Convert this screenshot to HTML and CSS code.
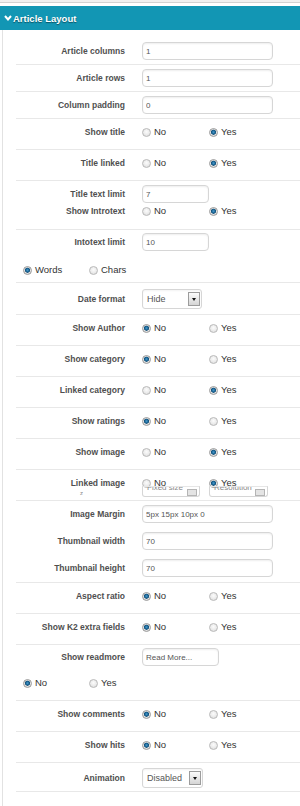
FILE: index.html
```html
<!DOCTYPE html>
<html lang="en">
<head>
  <meta charset="UTF-8" />
  <title>Article Layout</title>
  <link rel="stylesheet" href="styles.css">
</head>
<body>
  <div class="topbar"></div>

  <!-- Article layout panel -->
  <div class="hdr">
    <svg class="chev" width="8" height="6" viewBox="0 0 8 6"><polyline points="1,1 4,4.5 7,1" fill="none" stroke="#fff" stroke-width="2"/></svg>
    Article Layout
  </div>

  <div class="panel">
    <div class="row">
      <div class="line l-inp"><label class="lbl">Article columns</label><input class="inp" type="text" value="1"></div>
    </div>
    <div class="row">
      <div class="line l-inp"><label class="lbl">Article rows</label><input class="inp" type="text" value="1"></div>
    </div>
    <div class="row">
      <div class="line l-inp"><label class="lbl">Column padding</label><input class="inp" type="text" value="0"></div>
    </div>
    <div class="row">
      <div class="line l-rad"><label class="lbl">Show title</label>
        <span class="opt"><span class="radio"></span>No</span><span class="opt"><span class="radio on"></span>Yes</span></div>
    </div>
    <div class="row">
      <div class="line l-rad"><label class="lbl">Title linked</label>
        <span class="opt"><span class="radio"></span>No</span><span class="opt"><span class="radio on"></span>Yes</span></div>
    </div>
    <div class="row">
      <div class="line l-sub"><label class="lbl">Title text limit</label><input class="inp short" type="text" value="7"></div>
      <div class="line l-after"><label class="lbl">Show Introtext</label>
        <span class="opt"><span class="radio"></span>No</span><span class="opt"><span class="radio on"></span>Yes</span></div>
    </div>
    <div class="row">
      <div class="line l-sub2"><label class="lbl">Intotext limit</label><input class="inp short" type="text" value="10"></div>
      <div class="line l-free"><span class="opt"><span class="radio on"></span>Words</span><span class="opt"><span class="radio"></span>Chars</span></div>
    </div>
    <div class="row">
      <div class="line l-sel"><label class="lbl">Date format</label>
        <div class="sel"><span>Hide</span><span class="arrow"></span></div></div>
    </div>
    <div class="row">
      <div class="line l-rad"><label class="lbl">Show Author</label>
        <span class="opt"><span class="radio on"></span>No</span><span class="opt"><span class="radio"></span>Yes</span></div>
    </div>
    <div class="row">
      <div class="line l-rad"><label class="lbl">Show category</label>
        <span class="opt"><span class="radio on"></span>No</span><span class="opt"><span class="radio"></span>Yes</span></div>
    </div>
    <div class="row">
      <div class="line l-rad"><label class="lbl">Linked category</label>
        <span class="opt"><span class="radio"></span>No</span><span class="opt"><span class="radio on"></span>Yes</span></div>
    </div>
    <div class="row">
      <div class="line l-rad"><label class="lbl">Show ratings</label>
        <span class="opt"><span class="radio on"></span>No</span><span class="opt"><span class="radio"></span>Yes</span></div>
    </div>
    <div class="row">
      <div class="line l-rad"><label class="lbl">Show image</label>
        <span class="opt"><span class="radio"></span>No</span><span class="opt"><span class="radio on"></span>Yes</span></div>
    </div>
    <div class="row">
      <div class="line l-over">
        <div class="lbl lbl-stack"><span>Linked image</span><span class="stray">z</span></div>
        <div class="ctl-stack">
          <div class="opts"><span class="opt"><span class="radio"></span>No</span><span class="opt"><span class="radio on"></span>Yes</span></div>
          <div class="minis">
            <div class="mini w1"><span>Fixed size</span><i></i></div>
            <div class="mini w2"><span>Resolution</span><i></i></div>
          </div>
        </div>
      </div>
    </div>
    <div class="row">
      <div class="line l-grp"><label class="lbl">Image Margin</label><input class="inp" type="text" value="5px 15px 10px 0"></div>
      <div class="line l-grp"><label class="lbl">Thumbnail width</label><input class="inp" type="text" value="70"></div>
      <div class="line l-grp"><label class="lbl">Thumbnail height</label><input class="inp" type="text" value="70"></div>
    </div>
    <div class="row">
      <div class="line l-rad"><label class="lbl">Aspect ratio</label>
        <span class="opt"><span class="radio on"></span>No</span><span class="opt"><span class="radio"></span>Yes</span></div>
    </div>
    <div class="row">
      <div class="line l-rad"><label class="lbl">Show K2 extra fields</label>
        <span class="opt"><span class="radio on"></span>No</span><span class="opt"><span class="radio"></span>Yes</span></div>
    </div>
    <div class="row">
      <div class="line l-sub2"><label class="lbl">Show readmore</label><input class="inp mid" type="text" value="Read More..."></div>
      <div class="line l-free2"><span class="opt"><span class="radio on"></span>No</span><span class="opt"><span class="radio"></span>Yes</span></div>
    </div>
    <div class="row">
      <div class="line l-rad"><label class="lbl">Show comments</label>
        <span class="opt"><span class="radio on"></span>No</span><span class="opt"><span class="radio"></span>Yes</span></div>
    </div>
    <div class="row">
      <div class="line l-rad"><label class="lbl">Show hits</label>
        <span class="opt"><span class="radio on"></span>No</span><span class="opt"><span class="radio"></span>Yes</span></div>
    </div>
    <div class="row">
      <div class="line l-sel2"><label class="lbl">Animation</label>
        <div class="sel wide"><span>Disabled</span><span class="arrow"></span></div></div>
    </div>
  </div>
</body>
</html>
```

FILE: styles.css
```css
body {
  margin: 0;
  background: #fff;
  font-family: "Liberation Sans", Arial, sans-serif;
}
.topbar {
  height: 2px;
  background: #f0f0f0;
  border-bottom: 1px solid #d2d2d2;
  margin-bottom: 3px;
}
.hdr {
  height: 24px;
  background: #1296b4;
  color: #fff;
  font-weight: bold;
  font-size: 9.5px;
  display: flex;
  align-items: center;
  padding-left: 4px;
  text-shadow: 0 1px 1px rgba(0, 0, 0, 0.45);
}
.chev {
  margin-right: 1px;
}
.panel {
  margin-left: 2px;
  border-left: 1px solid #e2e2e2;
  padding-top: 8px;
  min-height: calc(100vh - 38px);
}
.row {
  margin-left: 13px;
  border-bottom: 1px solid #e8e8e8;
}
.line {
  display: flex;
  align-items: center;
}
.lbl {
  flex: none;
  width: 109px;
  margin-right: 17px;
  text-align: right;
  font-weight: bold;
  font-size: 8.5px;
  line-height: 12px;
  color: #4f4f4f;
}
/* row variants */
.l-inp { padding: 4px 0; }
.l-rad { padding: 7px 0 11px; }
.l-sub { padding: 4px 0 2px; }
.l-after { padding: 0 0 12px; }
.l-sub2 { padding: 3px 0; }
.l-free { padding: 10px 0 6px 7px; }
.l-free2 { padding: 8px 0 11px 7px; }
.l-sel { padding: 6px 0 5px; }
.l-sel2 { padding: 5px 0 3px; }
.l-grp { padding: 4px 0 5px; }
.l-over { padding: 7px 0 3px; align-items: flex-start; }

.opt {
  display: inline-flex;
  align-items: center;
  width: 67px;
  font-size: 9.5px;
  line-height: 12px;
  color: #333;
}
.l-free .opt, .l-free2 .opt { width: 66px; }
.radio {
  flex: none;
  width: 9px;
  height: 9px;
  box-sizing: border-box;
  border-radius: 50%;
  border: 1px solid #b9b9b9;
  background: radial-gradient(circle at 50% 40%, #fcfcfc 0, #ececec 50%, #d8d8d8 100%);
  margin-right: 3px;
}
.radio.on {
  border-color: #9a9a9a;
  background: radial-gradient(circle at 50% 45%, #4d9ccc 0, #1d6a9b 1.5px, #124f78 2.3px, #e6e6e6 2.8px, #d0d0d0 100%);
}
.inp {
  width: 131px;
  height: 18px;
  box-sizing: border-box;
  border: 1px solid #d6d6d6;
  border-radius: 4px;
  box-shadow: inset 0 1px 2px rgba(0, 0, 0, 0.07);
  padding: 0 3px;
  font-family: "Liberation Sans", Arial, sans-serif;
  font-size: 8px;
  color: #555;
  background: #fff;
  outline: none;
}
.inp.short { width: 67px; }
.inp.mid { width: 77px; }

.sel {
  width: 60px;
  height: 20px;
  box-sizing: border-box;
  border: 1px solid #d6d6d6;
  border-radius: 3px;
  display: flex;
  align-items: center;
  justify-content: space-between;
  padding: 0 1px 0 4px;
  font-size: 9px;
  color: #555;
  box-shadow: inset 0 1px 2px rgba(0, 0, 0, 0.05);
}
.sel.wide { width: 61px; }
.arrow {
  width: 12px;
  height: 14px;
  box-sizing: border-box;
  border: 1px solid #9c9c9c;
  background: linear-gradient(#fbfbfb, #d5d5d5);
  display: flex;
  align-items: center;
  justify-content: center;
}
.arrow::after {
  content: "";
  border-left: 2.5px solid transparent;
  border-right: 2.5px solid transparent;
  border-top: 3px solid #111;
}

/* overlapping row under Linked image */
.lbl-stack {
  display: flex;
  flex-direction: column;
  align-items: flex-end;
}
.stray {
  font-size: 6px;
  line-height: 6px;
  color: #888;
  font-weight: normal;
  margin: 1px 42px 0 0;
}
.ctl-stack {
  display: flex;
  flex-direction: column;
}
.opts {
  display: flex;
}
.minis {
  display: flex;
  gap: 9px;
  margin-top: -3px;
}
.mini {
  height: 11px;
  box-sizing: border-box;
  border: 1px solid #d6d6d6;
  border-top-color: #e6e6e6;
  border-radius: 0 0 3px 3px;
  overflow: hidden;
  display: flex;
  justify-content: space-between;
  align-items: flex-start;
  padding: 0 2px 0 4px;
}
.mini.w1 { width: 58px; }
.mini.w2 { width: 59px; }
.mini span {
  font-size: 8px;
  line-height: 10px;
  color: #888;
  margin-top: -4px;
}
.mini i {
  width: 10px;
  height: 7px;
  margin-top: 2px;
  box-sizing: border-box;
  border: 1px solid #b5b5b5;
  background: #e4e4e4;
}
```
